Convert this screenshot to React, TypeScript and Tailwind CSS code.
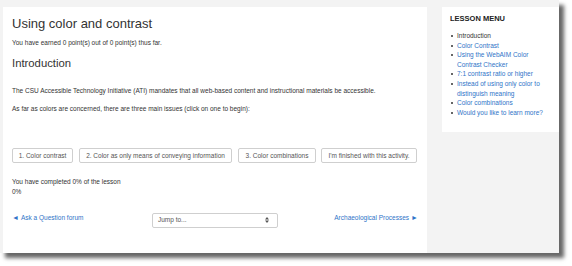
import React from "react";

const link = "text-[#2f74c8]";

function Btn({ w, children }: { w: string; children: React.ReactNode }) {
  return (
    <div className={`${w} h-[15px] border border-[#cfcfcf] rounded-[2px] bg-white flex items-center justify-center text-[6.5px] leading-[9px] text-[#555] whitespace-nowrap`}>
      <span>{children}</span>
    </div>
  );
}

const menu = [
  { t: "Introduction", l: false },
  { t: "Color Contrast", l: true },
  { t: "Using the WebAIM Color Contrast Checker", l: true },
  { t: "7:1 contrast ratio or higher", l: true },
  { t: "Instead of using only color to distinguish meaning", l: true },
  { t: "Color combinations", l: true },
  { t: "Would you like to learn more?", l: true },
];

export default function App() {
  return (
    <div className="w-[572px] h-[266px] bg-white" style={{ fontFamily: '"Liberation Sans", Arial, sans-serif' }}>
      <div className="w-[559px] h-[253px] bg-[#f3f3f3] flex items-start shadow-[5px_5px_4px_rgba(0,0,0,0.6)] text-[#333]">
        <div className="ml-[3px] mt-[7px] w-[424px] h-[246px] bg-white pl-[9px] pr-[9px] pt-[9px] flex flex-col">
          <div className="text-[13px] leading-[15px]">Using color and contrast</div>
          <div className="mt-[7px] text-[6.5px] leading-[9px]">You have earned 0 point(s) out of 0 point(s) thus far.</div>
          <div className="mt-[9.5px] text-[11.3px] leading-[13px]">Introduction</div>
          <div className="mt-[16px] text-[6.5px] leading-[9px] whitespace-nowrap">
            The CSU Accessible Technology Initiative (ATI) mandates that all web-based content and instructional materials be accessible.
          </div>
          <div className="mt-[9.5px] text-[6.5px] leading-[9px]">
            As far as colors are concerned, there are three main issues (click on one to begin):
          </div>
          <div className="mt-[34.5px] flex">
            <Btn w="w-[61px]">1. Color contrast</Btn>
            <div className="w-[6px]" />
            <Btn w="w-[153px]">2. Color as only means of conveying information</Btn>
            <div className="w-[6px]" />
            <Btn w="w-[78px]">3. Color combinations</Btn>
            <div className="w-[5px]" />
            <Btn w="w-[96px]">I'm finished with this activity.</Btn>
          </div>
          <div className="mt-[14px] text-[6.5px] leading-[10px]">
            <div>You have completed 0% of the lesson</div>
            <div>0%</div>
          </div>
          <div className="mt-[16px] w-[406px] grid grid-cols-[1fr_auto_1fr] items-start">
            <div className={`${link} text-[6.5px] leading-[9px]`}>
              <span className="text-[7px] mr-[2px]">◄</span>Ask a Question forum
            </div>
            <div className="w-[126px] h-[15px] border border-[#cfcfcf] rounded-[2px] bg-white flex items-center justify-between pl-[5px] pr-[8px] text-[6.5px] text-[#555]">
              <span>Jump to...</span>
              <svg width="4" height="6" viewBox="0 0 4 6">
                <path d="M0 2.5 L2 0 L4 2.5 Z M0 3.5 L2 6 L4 3.5 Z" fill="#555" />
              </svg>
            </div>
            <div className={`${link} text-[6.5px] leading-[9px] text-right`}>
              Archaeological Processes<span className="text-[7px] ml-[2px]">►</span>
            </div>
          </div>
        </div>
        <div className="ml-[15px] mt-[7px] w-[117px] bg-white pt-[7px] pl-[8px] pr-[8px] pb-[15px]">
          <div className="text-[7.5px] leading-[10px] font-bold text-[#222]">LESSON MENU</div>
          <div className="mt-[7px] flex flex-col">
            {menu.map((m) => (
              <div key={m.t} className="flex items-start text-[6.5px] leading-[9.6px]">
                <span className="w-[2px] h-[2px] bg-[#333] rounded-full mt-[4px] ml-[1px] mr-[4px] shrink-0" />
                <span className={m.l ? link : "text-[#333]"}>{m.t}</span>
              </div>
            ))}
          </div>
        </div>
      </div>
    </div>
  );
}
